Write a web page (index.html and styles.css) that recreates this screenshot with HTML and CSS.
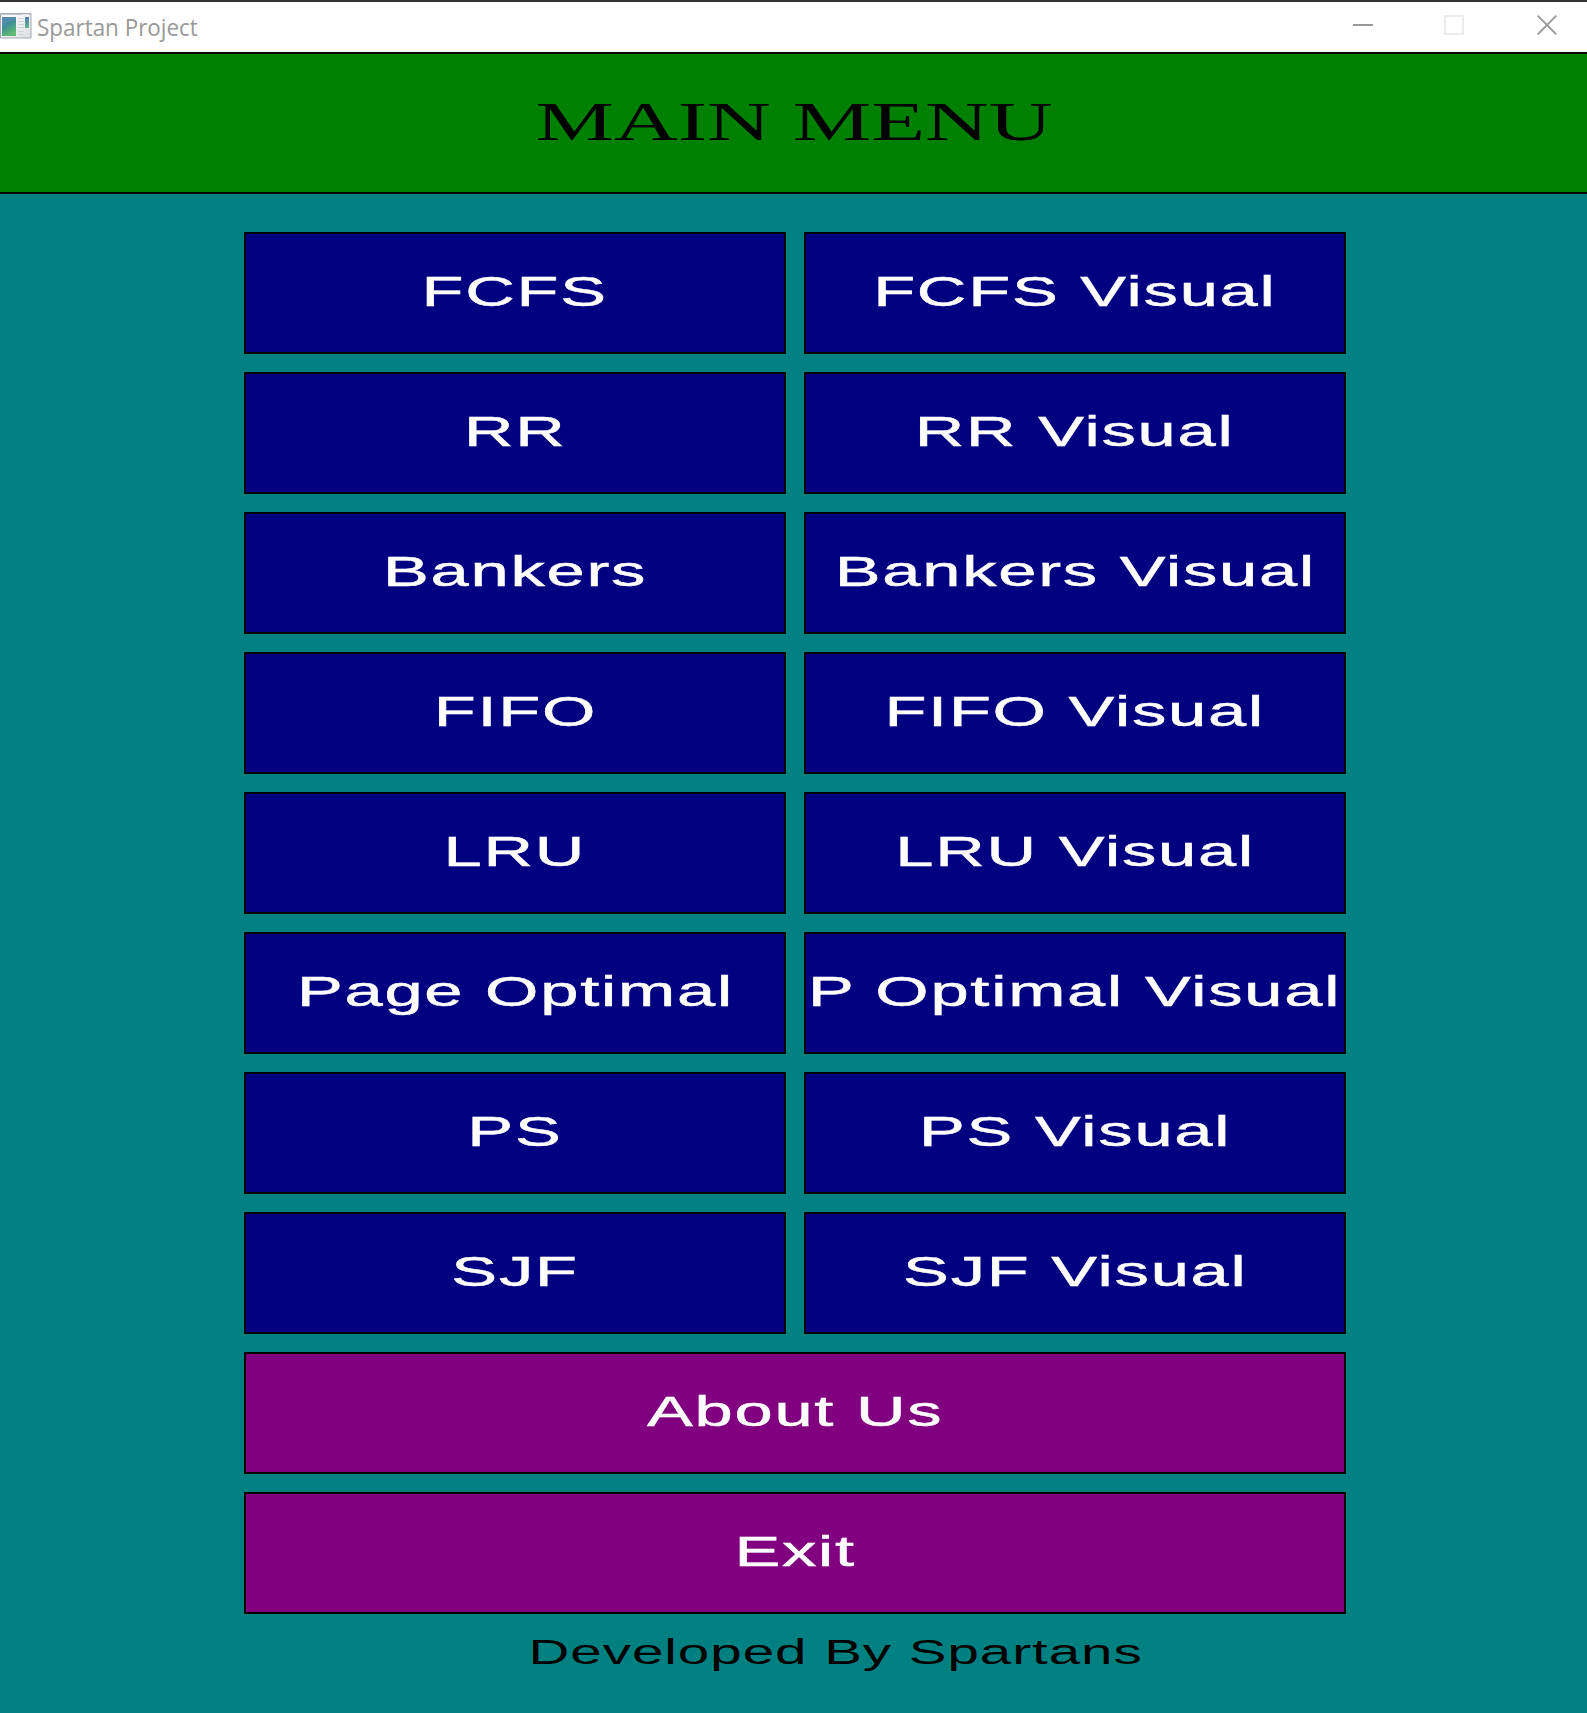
FILE: index.html
```html
<!DOCTYPE html>
<html lang="en">
<head>
<meta charset="utf-8">
<title>Spartan Project</title>
<link rel="stylesheet" href="styles.css">
</head>
<body>
<header class="titlebar">
  <svg class="app-icon" width="32" height="26" viewBox="0 0 32 26">
    <defs>
      <linearGradient id="screen" x1="0" y1="0" x2="0.4" y2="1"><stop offset="0" stop-color="#4779ad"/><stop offset="0.5" stop-color="#41909a"/><stop offset="1" stop-color="#5fbb70"/></linearGradient>
      <linearGradient id="side" x1="0" y1="0" x2="0" y2="1"><stop offset="0" stop-color="#4a7fb0"/><stop offset="1" stop-color="#5fb98a"/></linearGradient>
      <linearGradient id="frame" x1="0" y1="0" x2="1" y2="1"><stop offset="0" stop-color="#ffffff"/><stop offset="1" stop-color="#dedfe3"/></linearGradient>
    </defs>
    <path d="M.5 .5H31V25H.5Z" fill="url(#frame)" stroke="#a4a8b0"/>
    <path d="M0 1.2H31" stroke="#aeb1bf"/>
    <path d="M22 1.5h7" stroke="#e6e8ef"/>
    <rect x="2" y="4" width="14" height="19" fill="url(#screen)"/>
    <path d="M2 14Q6 8 16 7V4H2Z" fill="#6d9fc4" opacity=".35"/>
    <path d="M18 5.5h6M18 8.5h6M18 11.5h6M18 14.5h6M18 18.5h6M18 21.5h6" stroke="#d0d2d6"/>
    <rect x="25" y="4" width="4" height="11" fill="url(#side)"/>
  </svg>
  <span class="window-title">Spartan Project</span>
  <div class="controls">
    <svg class="minimize" width="20" height="20" viewBox="0 0 20 20"><path d="M0 10H20" stroke="#999" stroke-width="2"/></svg>
    <svg width="20" height="20" viewBox="0 0 20 20"><path d="M1 1H19V19H1Z" fill="none" stroke="#ebebeb" stroke-width="2"/></svg>
    <svg class="close" width="20" height="20" viewBox="0 0 20 20"><path d="M.7 .7L19.3 19.3M19.3 .7L.7 19.3" stroke="#999" stroke-width="1.9"/></svg>
  </div>
</header>
<div class="banner"><h1 class="heading">MAIN MENU</h1></div>
<main class="menu">
  <button class="item"><span class="label">FCFS</span></button>
  <button class="item"><span class="label">FCFS Visual</span></button>
  <button class="item"><span class="label">RR</span></button>
  <button class="item"><span class="label">RR Visual</span></button>
  <button class="item"><span class="label">Bankers</span></button>
  <button class="item"><span class="label">Bankers Visual</span></button>
  <button class="item"><span class="label">FIFO</span></button>
  <button class="item"><span class="label">FIFO Visual</span></button>
  <button class="item"><span class="label">LRU</span></button>
  <button class="item"><span class="label">LRU Visual</span></button>
  <button class="item"><span class="label">Page Optimal</span></button>
  <button class="item"><span class="label">P Optimal Visual</span></button>
  <button class="item"><span class="label">PS</span></button>
  <button class="item"><span class="label">PS Visual</span></button>
  <button class="item"><span class="label">SJF</span></button>
  <button class="item"><span class="label">SJF Visual</span></button>
  <button class="item wide"><span class="label">About Us</span></button>
  <button class="item wide"><span class="label">Exit</span></button>
</main>
<footer class="footer"><span class="credit">Developed By Spartans</span></footer>
</body>
</html>
```
FILE: styles.css
```css
* { box-sizing: border-box; }

body {
  margin: 0;
  min-height: 1713px;
  overflow: hidden;
  background: #008080;
  font-family: "Liberation Sans", Arial, sans-serif;
}

.titlebar {
  display: flex;
  align-items: center;
  height: 54px;
  padding-bottom: 2px;
  background: #fff;
  border-top: 2px solid #353334;
  border-bottom: 2px solid #000;
}

.app-icon { flex: none; }

.window-title {
  margin-left: 5px;
  font-family: "Open Sans", "Noto Sans", sans-serif;
  font-size: 23px;
  line-height: 30px;
  padding-top: 1px;
  color: #999;
  white-space: nowrap;
  transform: scaleX(.975);
  transform-origin: left;
}

.controls {
  display: flex;
  gap: 73px;
  margin-left: auto;
  padding: 0 30px 2px 0;
}

.controls svg { display: block; }

.controls .minimize { margin-right: -2px; }

.banner {
  display: flex;
  justify-content: center;
  height: 140px;
  background: #008000;
  border-bottom: 2px solid #000;
}

.heading {
  margin: 0;
  padding-left: 1px;
  font: 400 54.5px/136px "Liberation Serif", "Times New Roman", serif;
  color: #000;
  white-space: nowrap;
  transform: scaleX(1.618);
}

.menu {
  display: grid;
  grid-template-columns: 542px 542px;
  grid-auto-rows: 122px;
  gap: 18px;
  margin: 38px 0 0 244px;
}

.item {
  display: flex;
  align-items: center;
  justify-content: center;
  min-width: 0;
  padding: 0 0 4px;
  background: #000080;
  border: 2px solid #000;
  border-radius: 0;
  color: #fff;
  font-family: inherit;
  font-size: 43.2px;
  line-height: 50px;
}

.wide {
  grid-column: 1 / -1;
  background: #800080;
}

.label {
  white-space: nowrap;
  letter-spacing: 1.1px;
  -webkit-text-stroke: .5px #fff;
  transform: scaleX(1.59);
}

.footer {
  display: flex;
  justify-content: center;
  padding: 18px 0 0 85px;
}

.credit {
  font-size: 34.9px;
  line-height: 40px;
  letter-spacing: .6px;
  color: #000;
  white-space: nowrap;
  transform: scaleX(1.62);
}
```
